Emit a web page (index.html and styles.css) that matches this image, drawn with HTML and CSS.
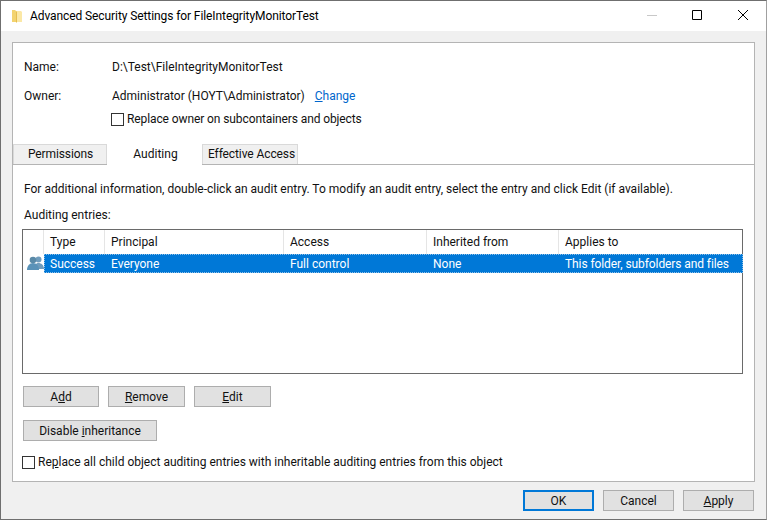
FILE: index.html
```html
<!DOCTYPE html>
<html lang="en">
<head>
<meta charset="utf-8">
<title>Advanced Security Settings</title>
<link rel="stylesheet" href="styles.css">
</head>
<body>
<div class="window">
  <header class="titlebar">
    <svg class="folder" width="12" height="14" viewBox="0 0 12 14"><path d="M1 1h3l1 1v11H1z" fill="#f3d36f"/><path d="M5 2h5l1 1v10H5z" fill="#fbe8a6"/><path d="M5 2l1 1v11l-1-1z" fill="#e5bd4f"/></svg>
    <span class="title">Advanced Security Settings for FileIntegrityMonitorTest</span>
    <div class="controls">
      <svg class="ctl" width="46" height="30" viewBox="0 0 46 30"><path d="M19 14.500h10" stroke="#c8c8c8" fill="none"/></svg>
      <svg class="ctl" width="46" height="30" viewBox="0 0 46 30"><path d="M18.500 9.500h9v9h-9z" stroke="#000" fill="none"/></svg>
      <svg class="ctl" width="46" height="30" viewBox="0 0 46 30"><path d="M18 9l10 10M28 9L18 19" stroke="#000" fill="none"/></svg>
    </div>
  </header>
  <main class="body">
    <section class="panel">
      <div class="info">
        <div class="info-row name-row"><span class="label">Name:</span><span>D:\Test\FileIntegrityMonitorTest</span></div>
        <div class="info-row owner-row"><span class="label">Owner:</span><span>Administrator (HOYT\Administrator)</span><a class="link" href="#"><u>C</u>hange</a></div>
        <label class="check owner-check"><span class="box"></span><span class="tight">Replace owner on subcontainers and objects</span></label>
      </div>
      <div class="tabs">
        <div class="tab tab-perm"><span class="tight">Permissions</span></div>
        <div class="tab tab-audit">Auditing</div>
        <div class="tab tab-eff"><span class="tight">Effective Access</span></div>
      </div>
      <div class="pane">
        <p class="hint">For additional information, double-click an audit entry. To modify an audit entry, select the entry and click Edit (if available).</p>
        <p class="entries-label">Auditing entries:</p>
        <div class="list">
          <div class="list-row list-head">
            <div class="cell c0"></div>
            <div class="cell c1">Type</div>
            <div class="cell c2">Principal</div>
            <div class="cell c3">Access</div>
            <div class="cell c4">Inherited from</div>
            <div class="cell c5">Applies to</div>
          </div>
          <div class="list-row list-item">
            <div class="cell c0 icon-cell">
              <svg width="17" height="16" viewBox="0 0 17 16"><circle cx="11.500" cy="4.500" r="3" fill="#6f9cbd"/><path d="M7 14c0-4 2-6 4.500-6S17 10 17 14z" fill="#6f9cbd"/><circle cx="6" cy="5" r="3.300" fill="#5a8aa8"/><path d="M0 15c0-4 2.500-7 6-7s6 3 6 7z" fill="#5a92b8"/></svg>
            </div>
            <div class="selected">
              <div class="cell c1">Success</div>
              <div class="cell c2">Everyone</div>
              <div class="cell c3">Full control</div>
              <div class="cell c4">None</div>
              <div class="cell c5 wide">This folder, subfolders and files</div>
            </div>
          </div>
        </div>
        <div class="btn-row">
          <button class="btn w-add">A<u>d</u>d</button>
          <button class="btn w-rem"><u>R</u>emove</button>
          <button class="btn w-rem"><u>E</u>dit</button>
        </div>
        <div class="btn-row inherit-row">
          <button class="btn w-dis">Disable <u>i</u>nheritance</button>
        </div>
        <label class="check child-check"><span class="box"></span><span>Re<u>p</u>lace all child object auditing entries with inheritable auditing entries from this object</span></label>
      </div>
    </section>
    <footer class="footer">
      <button class="btn w-foot default">OK</button>
      <button class="btn w-foot">Cancel</button>
      <button class="btn w-foot"><u>A</u>pply</button>
    </footer>
  </main>
</div>
</body>
</html>
```

FILE: styles.css
```css
* { box-sizing: border-box; }
html, body { margin: 0; padding: 0; }
body {
  width: 767px;
  height: 520px;
  overflow: hidden;
  font-family: Roboto, "Noto Sans", sans-serif;
  font-size: 12px;
  line-height: 16px;
  color: #111;
}
.window {
  width: 767px;
  height: 520px;
  display: flex;
  flex-direction: column;
  background: #f0f0f0;
  border: 1px solid #6f6f6f;
  border-right-color: #a0a0a0;
}
.titlebar {
  height: 30px;
  flex: none;
  background: #fff;
  display: flex;
  align-items: center;
  padding-left: 10px;
}
.folder { margin-right: 7px; }
.title { flex: 1; color: #000; letter-spacing: -0.09px; }
.controls { display: flex; }
.ctl { display: block; }
.body {
  flex: 1;
  padding: 11px 11px 0 11px;
  display: flex;
  flex-direction: column;
}
.panel {
  width: 743px;
  height: 440px;
  flex: none;
  background: #fff;
  border: 1px solid #b4b4b4;
}
.info { height: 101px; padding: 16px 0 0 11px; }
.info-row { display: flex; height: 16px; }
.label { width: 88px; }
.owner-row { margin-top: 13px; }
.link { margin-left: 10px; color: #0066cc; text-decoration: none; }
.check { display: flex; align-items: center; }
.box {
  width: 13px;
  height: 13px;
  flex: none;
  background: #fff;
  border: 1px solid #333;
  margin-right: 3px;
}
.tight { letter-spacing: -0.1px; }
.owner-check { margin: 7px 0 0 87px; height: 16px; }
.tabs {
  display: flex;
  height: 21px;
  align-items: flex-end;
  border-bottom: 1px solid #b4b4b4;
}
.tab {
  height: 20px;
  background: #f0f0f0;
  border: 1px solid #d9d9d9;
  border-bottom: 0;
  text-align: center;
  line-height: 19px;
}
.tab-perm { width: 94px; padding-left: 1px; }
.tab-audit {
  width: 95px;
  height: 22px;
  margin-bottom: -1px;
  padding-left: 2px;
  background: #fff;
  border: 0;
  line-height: 22px;
}
.tab-eff { width: 96px; padding-left: 3px; }
.pane { padding: 16px 0 0 9px; }
.hint, .entries-label { margin: 0; padding-left: 2px; }
.entries-label { margin-top: 10px; }
.list {
  width: 721px;
  height: 145px;
  margin-top: 6px;
  border: 1px solid #6a6a6a;
  background: #fff;
}
.list-row { display: flex; height: 24px; }
.list-head .cell { border-right: 1px solid #e5e5e5; padding-top: 4px; }
.list-item { height: 19px; }
.cell { flex: none; padding-left: 6px; line-height: 17px; white-space: nowrap; }
.c0 { width: 21px; padding-left: 0; }
.c1 { width: 61px; }
.c2 { width: 179px; }
.c3 { width: 143px; }
.c4 { width: 132px; }
.c5 { width: 184px; }
.list-head .c5 { border-right: 0; }
.icon-cell svg { display: block; margin: 1px 0 0 4px; }
.selected {
  display: flex;
  flex: 1;
  height: 19px;
  background: #0078d7;
  color: #fff;
  outline: 1px dotted #8fbfe6;
  outline-offset: -1px;
}
.selected .cell { line-height: 20px; }
.selected .wide { letter-spacing: -0.09px; }
.btn {
  height: 21px;
  padding: 1px 0 0;
  font: inherit;
  line-height: 17px;
  color: #111;
  background: #e1e1e1;
  border: 1px solid #adadad;
  border-radius: 0;
}
.btn-row { display: flex; gap: 9px; margin: 12px 0 0 1px; }
.inherit-row { margin-top: 13px; }
.w-add { width: 76px; }
.w-rem { width: 77px; }
.w-dis { width: 134px; }
.child-check { margin-top: 13px; height: 16px; }
.footer { display: flex; justify-content: flex-end; gap: 9px; margin-top: 8px; padding-right: 1px; }
.w-foot { width: 71px; }
.default { border: 2px solid #0078d7; }
```
